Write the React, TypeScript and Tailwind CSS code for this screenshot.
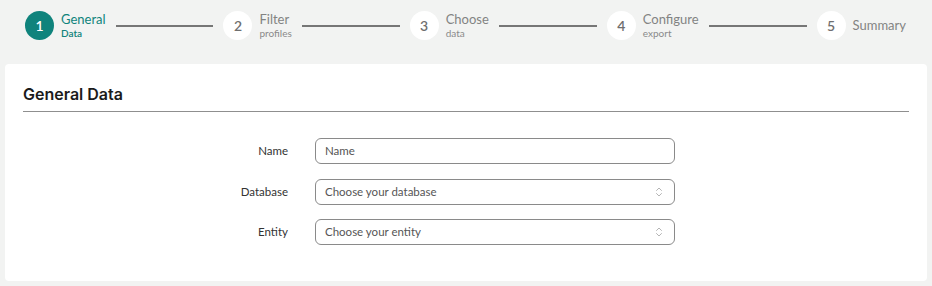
import React from 'react';

const steps = [
    { n: 1, title: 'General', sub: 'Data' },
    { n: 2, title: 'Filter', sub: 'profiles' },
    { n: 3, title: 'Choose', sub: 'data' },
    { n: 4, title: 'Configure', sub: 'export' },
    { n: 5, title: 'Summary', sub: '' },
];

const Chevrons = () => (
    <svg width="8" height="12" viewBox="0 0 8 12" fill="none" stroke="#b5b5b5" strokeWidth="1" strokeLinecap="round" strokeLinejoin="round">
        <path d="M1.5 4.5 L4 2 L6.5 4.5" />
        <path d="M1.5 7.5 L4 10 L6.5 7.5" />
    </svg>
);

const Step: React.FC<{ n: number; title: string; sub: string; active?: boolean }> = ({ n, title, sub, active }) => (
    <div className="flex items-center shrink-0">
        <div
            className={
                active
                    ? 'w-[29px] h-[29px] rounded-full bg-[#0f837c] text-white flex items-center justify-center text-[14px] font-semibold'
                    : 'w-[29px] h-[29px] rounded-full bg-white text-[#6f6f6f] flex items-center justify-center text-[14px] font-semibold'
            }
        >
            {n}
        </div>
        <div className="ml-[7px] flex flex-col">
            <span className={active ? 'text-[13px] leading-[15px] text-[#0f837c]' : 'text-[13px] leading-[15px] text-[#838383]'}>{title}</span>
            {sub && (
                <span className={active ? 'text-[10px] leading-[12px] text-[#0f837c] font-semibold' : 'text-[10px] leading-[12px] text-[#8a8a8a]'}>{sub}</span>
            )}
        </div>
    </div>
);

const Row: React.FC<{ label: string; children: React.ReactNode }> = ({ label, children }) => (
    <div className="flex items-center">
        <div className="w-[265px] text-right text-[11.5px] text-[#333]">{label}</div>
        <div className="ml-[27px] w-[360px]">{children}</div>
    </div>
);

const box = 'h-[26px] rounded-[6px] border border-[#8a8a8a] flex items-center justify-between pl-[9px] pr-[11px] text-[11.5px] text-[#555]';

export default function App() {
    return (
        <div className="w-[932px] h-[286px] bg-[#f2f3f2] overflow-hidden" style={{ fontFamily: 'Lato, "Noto Sans", sans-serif' }}>
            <div className="h-[64px] flex items-start pt-[11px] pl-[25px] pr-[26px]">
                {steps.map((s, i) => (
                    <React.Fragment key={s.n}>
                        <Step {...s} active={i === 0} />
                        {i < steps.length - 1 && <div className="flex-1 h-[2px] bg-[#767676] mx-[10px] mt-[14px]" />}
                    </React.Fragment>
                ))}
            </div>
            <div className="mx-[5px] h-[217px] bg-white rounded-[4px] px-[18px] pt-[20px]">
                <h2 className="text-[16px] font-semibold text-[#1b1b1b] leading-[20px] pb-[7px] border-b border-[#8f8f8f]" style={{ fontFamily: 'Inter, sans-serif' }}>
                    General Data
                </h2>
                <div className="mt-[26px] flex flex-col gap-[14.5px]">
                    <Row label="Name">
                        <div className={box}>Name</div>
                    </Row>
                    <Row label="Database">
                        <div className={box}>
                            <span>Choose your database</span>
                            <Chevrons />
                        </div>
                    </Row>
                    <Row label="Entity">
                        <div className={box}>
                            <span>Choose your entity</span>
                            <Chevrons />
                        </div>
                    </Row>
                </div>
            </div>
        </div>
    );
}
